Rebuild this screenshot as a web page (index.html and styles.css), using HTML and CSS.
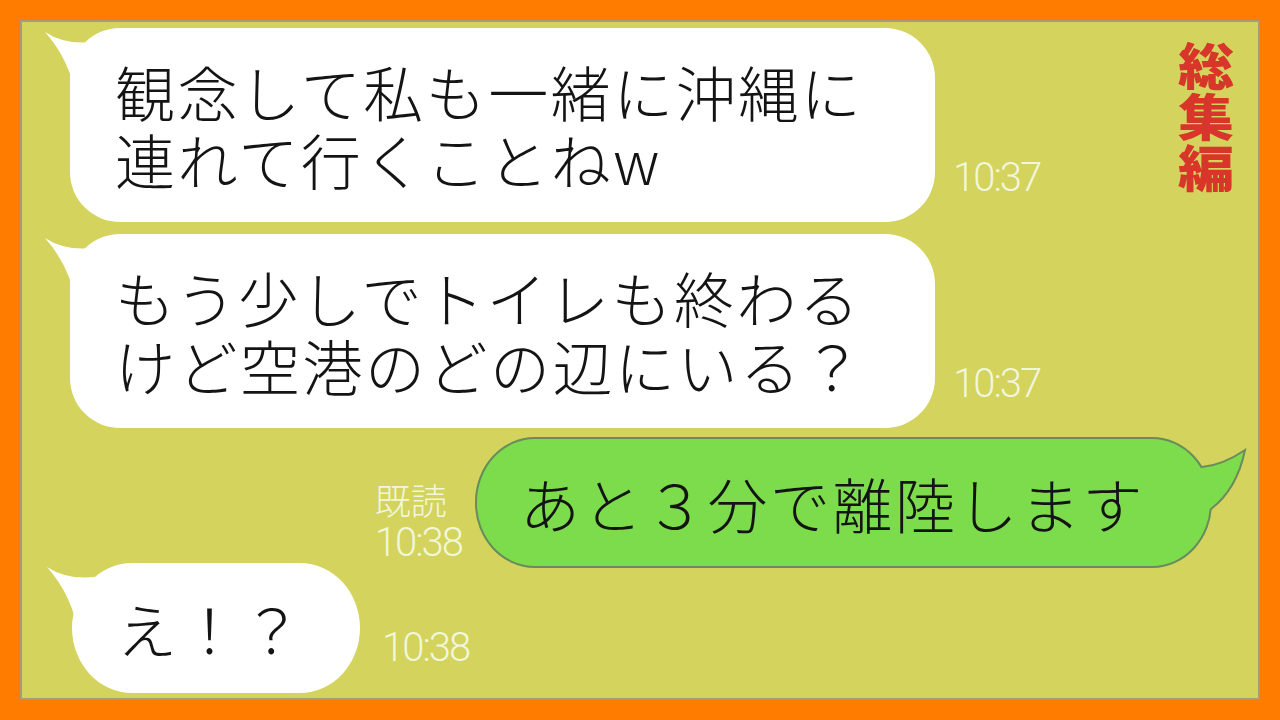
FILE: index.html
```html
<!DOCTYPE html>
<html lang="ja">
<head>
<meta charset="utf-8">
<title>総集編</title>
<link rel="stylesheet" href="styles.css">
</head>
<body>
<div class="panel">
  <div class="badge">総<br>集<br>編</div>

  <div class="row row-first">
    <div class="bubble bubble-in bubble-tall">
      <svg class="tail-in" viewBox="-30 -5 110 85" width="110" height="85"><path d="M -25 4 Q 10 27 70 0 L 70 72 L 7 72 Q 0 32 -25 4 Z"/></svg>
      <p class="msg">観念して私も一緒に沖縄に<br>連れて行くことねw</p>
    </div>
    <span class="time">10:37</span>
  </div>

  <div class="row row-second">
    <div class="bubble bubble-in bubble-tall">
      <svg class="tail-in" viewBox="-30 -5 110 85" width="110" height="85"><path d="M -25 4 Q 10 27 70 0 L 70 72 L 7 72 Q 0 32 -25 4 Z"/></svg>
      <p class="msg">もう少しでトイレも終わる<br>けど空港のどの辺にいる？</p>
    </div>
    <span class="time">10:37</span>
  </div>

  <div class="row row-mine">
    <div class="status">
      <span class="read">既読</span>
      <span class="time time-stack">10:38</span>
    </div>
    <div class="bubble bubble-out">
      <svg class="tail-out" viewBox="700 0 80 80" width="80" height="80">
        <path class="tail-fill" d="M 727 30 Q 748 28 770 13 Q 762 52 736 72 L 712 60 Z"/>
        <path class="tail-edge" d="M 727 30 Q 748 28 770 13 Q 762 52 736 72"/>
      </svg>
      <p class="msg">あと３分で離陸します</p>
    </div>
  </div>

  <div class="row row-last">
    <div class="bubble bubble-in bubble-short">
      <svg class="tail-in" viewBox="-30 -5 110 85" width="110" height="85"><path d="M -25 4 Q 10 27 70 0 L 70 72 L 7 72 Q 0 32 -25 4 Z"/></svg>
      <p class="msg">え！？</p>
    </div>
    <span class="time time-last">10:38</span>
  </div>
</div>
</body>
</html>
```

FILE: styles.css
```css
html, body {
  margin: 0;
  padding: 0;
}

body {
  background: #ff7c00;
  width: 1280px;
  height: 720px;
  overflow: hidden;
  font-family: "Noto Sans CJK JP", "Noto Sans", sans-serif;
}

/* chat area framed by the orange border */
.panel {
  position: relative;
  margin: 20px;
  width: 1236px;
  height: 676px;
  border: 2px solid #a99a78;
  background: #d3d35e;
  overflow: hidden;
}

/* vertical red label, glyphs widened a little */
.badge {
  position: absolute;
  top: 16px;
  right: 26px;
  width: 52px;
  font-size: 50px;
  line-height: 51px;
  font-weight: 900;
  color: #d8362a;
  text-align: center;
  transform: scaleX(1.12);
  transform-origin: center top;
}

.row {
  display: flex;
  align-items: flex-end;
}

.row-first { margin-top: 6px; }
.row-second { margin-top: 12px; }
.row-mine {
  margin-top: 9px;
  justify-content: flex-end;
  padding-right: 46px;
}
.row-last { margin-top: -5px; }

.bubble {
  position: relative;
  display: flex;
  align-items: center;
  box-sizing: border-box;
  padding-left: 45px;
  flex: none;
}

.bubble-in {
  background: #ffffff;
  margin-left: 48px;
}

.bubble-tall {
  width: 865px;
  height: 194px;
  border-radius: 50px;
}

.bubble-short {
  width: 288px;
  height: 130px;
  border-radius: 60px / 65px;
  margin-left: 50px;
}

.bubble-out {
  width: 737px;
  height: 131px;
  border-radius: 60px / 65px;
  background: #7ddc4b;
  box-shadow: inset 0 0 0 2px #6c8a5c;
}

.tail-in {
  position: absolute;
  left: -30px;
  top: -5px;
  overflow: visible;
}

.tail-in path {
  fill: #ffffff;
}

.tail-out {
  position: absolute;
  left: 700px;
  top: 0;
  overflow: visible;
}

.tail-fill {
  fill: #7ddc4b;
}

.tail-edge {
  fill: none;
  stroke: #6c8a5c;
  stroke-width: 2;
}

.msg {
  position: relative;
  margin: 0;
  font-size: 60px;
  line-height: 68px;
  letter-spacing: 2.5px;
  font-weight: 300;
  color: #141414;
  white-space: nowrap;
}

.time {
  font-family: Roboto, "Liberation Sans", sans-serif;
  font-size: 40px;
  line-height: 40px;
  letter-spacing: -2px;
  font-weight: 300;
  color: #f1f7da;
  margin-left: 18px;
  margin-bottom: 24px;
}

.time-last {
  margin-left: 22px;
  margin-bottom: 25px;
}

.status {
  display: flex;
  flex-direction: column;
  align-items: flex-start;
  margin-right: 13px;
  margin-bottom: 5px;
}

.read {
  font-size: 36px;
  line-height: 40px;
  font-weight: 300;
  color: #f1f7da;
}

.time-stack {
  margin: 4px 0 0 0;
}
```
